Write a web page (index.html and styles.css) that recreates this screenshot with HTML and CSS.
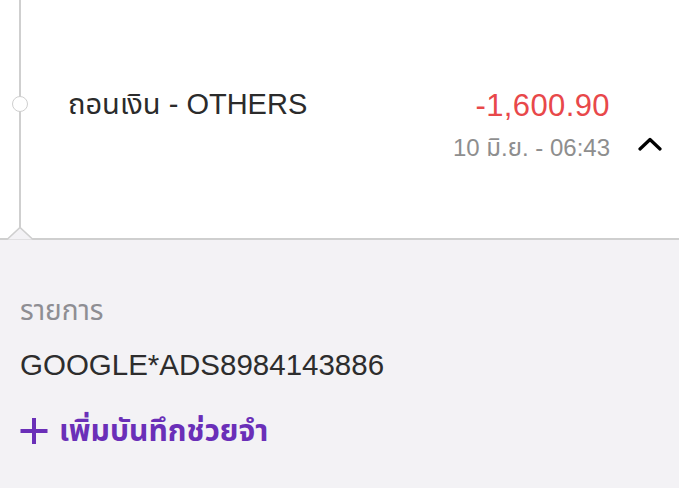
FILE: index.html
```html
<!DOCTYPE html>
<html lang="th">
<head>
<meta charset="utf-8">
<link rel="stylesheet" href="styles.css">
</head>
<body>
<div class="card">
  <section class="txn">
    <div class="rail">
      <span class="dot"></span>
    </div>
    <div class="txn-main">
      <div class="txn-title">ถอนเงิน - OTHERS</div>
    </div>
    <div class="txn-side">
      <div class="amount">-1,600.90</div>
      <div class="date">10 มิ.ย. - 06:43</div>
    </div>
    <div class="toggle">
      <svg width="24" height="14" viewBox="0 0 24 14"><path d="M2 12 L12 2.5 L22 12" fill="none" stroke="#000" stroke-width="3.2" stroke-linecap="round" stroke-linejoin="round"/></svg>
    </div>
    <svg class="notch" width="26" height="13" viewBox="0 0 26 13"><path d="M0 12.5 L13 0.5 L26 12.5" fill="#f3f2f5" stroke="#cfcfcf" stroke-width="1.6"/></svg>
  </section>
  <section class="detail">
    <div class="label">รายการ</div>
    <div class="value">GOOGLE*ADS8984143886</div>
    <div class="memo">
      <svg width="30" height="30" viewBox="0 0 30 30"><path d="M15 2 V28 M1.5 15 H28.5" stroke="#6a2fb8" stroke-width="4"/></svg>
      <span>เพิ่มบันทึกช่วยจำ</span>
    </div>
  </section>
</div>
</body>
</html>
```
FILE: styles.css
```css
html, body {
  margin: 0;
  padding: 0;
  background: #f3f2f5;
}
body {
  font-family: "Liberation Sans", "Noto Sans Thai", "Noto Sans", sans-serif;
  width: 679px;
  height: 488px;
  overflow: hidden;
}
.card {
  display: flex;
  flex-direction: column;
}
.txn {
  position: relative;
  height: 238px;
  background: #fff;
  border-bottom: 2px solid #cfcfcf;
  display: flex;
  align-items: flex-start;
}
.rail {
  width: 40px;
  height: 228px;
  display: flex;
  justify-content: center;
  position: relative;
}
.rail::before {
  content: "";
  width: 2px;
  background: #cfcfcf;
  height: 100%;
}
.dot {
  position: absolute;
  left: 12px;
  top: 96px;
  width: 13px;
  height: 13px;
  border: 1.6px solid #cfcfcf;
  border-radius: 50%;
  background: #fff;
  box-sizing: border-box;
  width: 16px;
  height: 16px;
}
.notch {
  position: absolute;
  left: 7px;
  bottom: -2px;
}
.txn-main {
  flex: 1;
  padding-left: 28px;
  padding-top: 86px;
}
.txn-title {
  font-size: 29px;
  color: #2b2b2b;
  line-height: 36px;
}
.txn-side {
  padding-top: 86px;
  text-align: right;
  display: flex;
  flex-direction: column;
  align-items: flex-end;
}
.amount {
  font-size: 31px;
  color: #e8484a;
  line-height: 40px;
  letter-spacing: 0.4px;
}
.date {
  font-size: 24px;
  color: #8e8e8e;
  line-height: 30px;
  margin-top: 7px;
}
.toggle {
  width: 69px;
  padding-top: 137px;
  display: flex;
  justify-content: center;
  padding-left: 10px;
  box-sizing: border-box;
}
.detail {
  padding: 55px 20px 0;
}
.label {
  font-size: 28px;
  color: #8e8e93;
  line-height: 32px;
}
.value {
  font-size: 29.5px;
  color: #2d2d2d;
  line-height: 36px;
  margin-top: 20px;
}
.memo {
  margin-top: 30px;
  display: flex;
  align-items: center;
  gap: 10px;
  color: #6a2fb8;
  font-size: 30px;
  font-weight: 700;
  line-height: 36px;
}
.memo svg {
  margin-left: -1px;
}
```
